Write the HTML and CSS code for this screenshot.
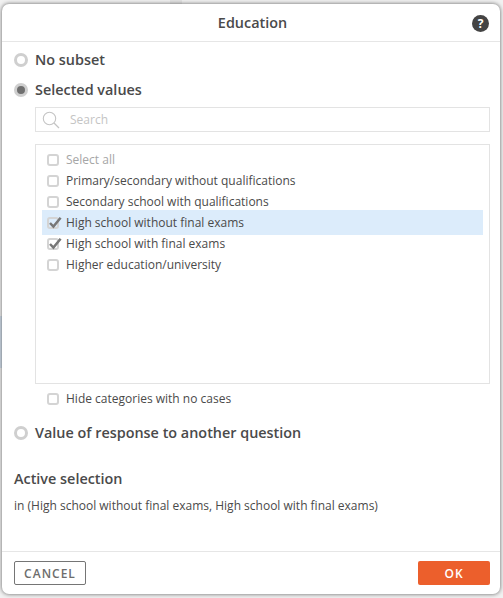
FILE: index.html
```html
<!DOCTYPE html>
<html lang="en">
<head>
<meta charset="utf-8">
<title>Education</title>
<link rel="stylesheet" href="styles.css">
</head>
<body>
<div class="dialog">
  <header class="head">
    <h1 class="title">Education</h1>
    <span class="help">?</span>
  </header>
  <main class="body">
    <label class="radio-row first"><span class="radio"></span>No subset</label>
    <label class="radio-row second"><span class="radio on"></span>Selected values</label>
    <div class="search">
      <svg class="search-icon" width="18" height="18" viewBox="0 0 18 18"><circle cx="7.5" cy="7.5" r="6.2" fill="none" stroke="#c4c4c4" stroke-width="1.1"/><path d="M12 12l5 5" stroke="#c4c4c4" stroke-width="1.3" fill="none"/></svg>
      <span class="placeholder">Search</span>
    </div>
    <div class="list">
      <div class="item muted"><span class="check"></span>Select all</div>
      <div class="item"><span class="check"></span>Primary/secondary without qualifications</div>
      <div class="item"><span class="check"></span>Secondary school with qualifications</div>
      <div class="item hl"><span class="check"><svg class="tick" width="14" height="14" viewBox="0 0 14 14"><path d="M2 7l3.4 3.6L12.6 1.8" fill="none" stroke="#777" stroke-width="2.5"/></svg></span>High school without final exams</div>
      <div class="item"><span class="check"><svg class="tick" width="14" height="14" viewBox="0 0 14 14"><path d="M2 7l3.4 3.6L12.6 1.8" fill="none" stroke="#777" stroke-width="2.5"/></svg></span>High school with final exams</div>
      <div class="item"><span class="check"></span>Higher education/university</div>
    </div>
    <div class="item hide"><span class="check"></span>Hide categories with no cases</div>
    <label class="radio-row third"><span class="radio"></span>Value of response to another question</label>
    <h2 class="active-title">Active selection</h2>
    <p class="active-text">in (High school without final exams, High school with final exams)</p>
  </main>
  <footer class="foot">
    <button class="btn cancel">CANCEL</button>
    <button class="btn ok">OK</button>
  </footer>
</div>
</body>
</html>
```

FILE: styles.css
```css
html, body { margin: 0; height: 100%; }
body {
  width: 503px;
  height: 598px;
  overflow: hidden;
  background-color: #f1f1f1;
  background-image:
    linear-gradient(#d3dfec, #d3dfec),
    linear-gradient(#e4e4e4, #e4e4e4);
  background-repeat: no-repeat;
  background-size: 2px 52px, 12px 4px;
  background-position: 0 316px, 170px 0;
  font-family: "Open Sans", "Liberation Sans", sans-serif;
  color: #4a4a4a;
  box-sizing: border-box;
  padding: 4px 3px 4px 2px;
}
.dialog {
  height: 590px;
  background: #fff;
  border-radius: 7px;
  box-shadow: 0 0 4px rgba(0,0,0,.6);
  display: flex;
  flex-direction: column;
}
.head {
  height: 37px;
  flex: none;
  border-bottom: 1px solid #e6e6e6;
  display: flex;
  align-items: center;
  justify-content: center;
  padding-left: 3px;
  position: relative;
}
.title { margin: 0; font-size: 14.4px; font-weight: 600; color: #4a4a4a; }
.help {
  position: absolute;
  right: 11px;
  top: 11px;
  width: 17px;
  height: 17px;
  border-radius: 50%;
  background: #444;
  color: #fff;
  font-size: 12px;
  font-weight: 700;
  line-height: 17px;
  text-align: center;
}
.body { flex: 1; padding: 0 10px 0 12px; }
.radio-row {
  display: flex;
  align-items: center;
  gap: 7px;
  font-size: 14.4px;
  font-weight: 600;
  line-height: 20px;
}
.first { margin-top: 8px; }
.second { margin-top: 10px; }
.third { margin-top: 14px; }
.radio {
  width: 14px;
  height: 14px;
  box-sizing: border-box;
  border-radius: 50%;
  border: 3px solid #cfcfcf;
  background: #fff;
  flex: none;
}
.radio.on { background: #6f6f6f; }
.search {
  margin: 7px 0 0 21px;
  height: 25px;
  box-sizing: border-box;
  border: 1px solid #e3e3e3;
  display: flex;
  align-items: center;
  padding-left: 6px;
}
.search-icon { flex: none; }
.placeholder { margin-left: 10px; font-size: 12px; color: #c4c4c4; }
.list {
  margin: 12px 0 0 21px;
  height: 240px;
  box-sizing: border-box;
  border: 1px solid #e3e3e3;
  padding: 4px 6px;
}
.item {
  display: flex;
  align-items: center;
  gap: 7px;
  height: 21px;
  font-size: 12px;
  padding-left: 5px;
}
.muted { color: #a6a6a6; }
.hl { background: #dcecfb; height: 25px; margin: -2px 0; }
.check {
  width: 12px;
  height: 12px;
  box-sizing: border-box;
  border: 2px solid #d4d4d4;
  border-radius: 3px;
  background: #fff;
  flex: none;
  position: relative;
}
.hl .check { background: transparent; }
.tick { position: absolute; left: -1px; top: -3px; }
.hide { margin: 4px 0 0 28px; }
.active-title { margin: 26px 0 0; font-size: 14.4px; font-weight: 600; line-height: 20px; color: #4a4a4a; }
.active-text { margin: 9px 0 0; font-size: 12px; line-height: 16px; }
.foot {
  height: 43px;
  box-sizing: border-box;
  flex: none;
  border-top: 1px solid #e6e6e6;
  display: flex;
  justify-content: space-between;
  align-items: flex-start;
  padding: 9px 10px 0 12px;
}
.btn {
  width: 72px;
  height: 24px;
  box-sizing: border-box;
  border-radius: 2px;
  font-family: inherit;
  font-size: 12px;
  font-weight: 600;
  letter-spacing: 1px;
  padding: 0;
}
.cancel { background: #fff; border: 1px solid #757575; color: #6d6d6d; }
.ok { background: #ec5f2c; border: 0; color: #fff; }
```
